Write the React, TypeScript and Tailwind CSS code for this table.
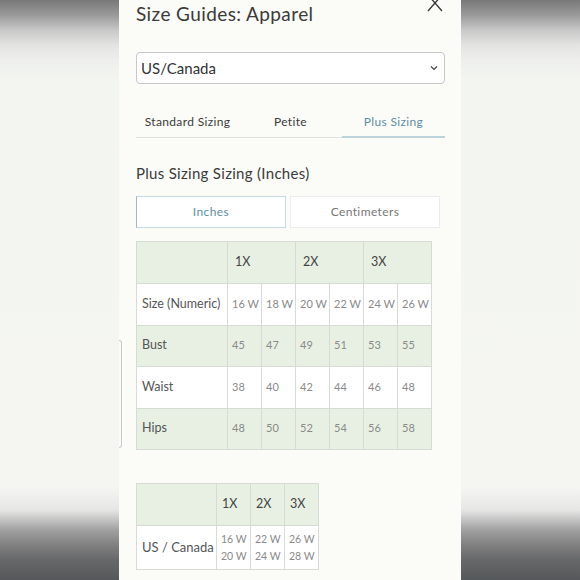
import React, { useState } from 'react';

const font = { fontFamily: 'Lato, "Open Sans", sans-serif' };

const sizeRows = [
  { label: 'Size (Numeric)', values: ['16 W', '18 W', '20 W', '22 W', '24 W', '26 W'], green: false },
  { label: 'Bust', values: ['45', '47', '49', '51', '53', '55'], green: true },
  { label: 'Waist', values: ['38', '40', '42', '44', '46', '48'], green: false },
  { label: 'Hips', values: ['48', '50', '52', '54', '56', '58'], green: true },
];

const tabs = ['Standard Sizing', 'Petite', 'Plus Sizing'];

const App: React.FC = () => {
  const [activeTab, setActiveTab] = useState('Plus Sizing');
  const [unit, setUnit] = useState('in');

  return (
    <div
      className="w-[580px] h-[580px] overflow-hidden flex justify-center bg-[linear-gradient(to_bottom,#787878_0%,#9a9a9a_2.6%,#c8c8c8_5.2%,#e3e3e2_7.8%,#eeefec_10.3%,#f3f5f0_13.8%,#f5f6f2_84%,#e6e6e5_87.9%,#c2c2c2_89.7%,#a0a0a0_91.4%,#808081_94%,#666768_96.6%,#55585a_100%)]"
      style={font}
    >
      {/* Panel */}
      <div className="relative w-[342px] h-full bg-[#fbfbf8] pl-[17px] pr-[16px]">
        {/* close */}
        <svg className="absolute left-[307px] top-[-6px]" width="18" height="19" viewBox="0 0 18 19">
          <path d="M2 1 L16 17 M16 1 L2 17" stroke="#333" strokeWidth="1.3" fill="none" />
        </svg>

        {/* edge of something underneath */}
        <div className="absolute left-0 top-[340px] w-[3px] h-[108px] border border-l-0 border-[#c9c9c9] rounded-r-[3px]" />

        <h1 className="pt-[2px] text-[19px] leading-6 text-[#3a3a3a] tracking-[0.4px]">Size Guides: Apparel</h1>

        {/* Region select */}
        <div className="mt-[26px] h-8 bg-white border border-[#c8c8c8] rounded-[4px] flex items-center justify-between pl-[4px] pr-[6px]">
          <span className="text-[15px] text-[#333]">US/Canada</span>
          <svg width="8" height="6" viewBox="0 0 8 6">
            <path d="M1 1.5 L4 4.5 L7 1.5" stroke="#444" strokeWidth="1.2" fill="none" />
          </svg>
        </div>

        {/* Tabs */}
        <div className="mt-[19px] flex border-b border-[#dfe3e0]">
          {tabs.map((t) => (
            <button
              key={t}
              onClick={() => setActiveTab(t)}
              className={`flex-1 h-[35px] pt-[4px] text-[12px] tracking-[0.35px] -mb-px border-b-2 ${
                activeTab === t ? 'text-[#5d8fa2] border-[#bcd3dc]' : 'text-[#3a3a3a] border-transparent'
              }`}
            >
              {t}
            </button>
          ))}
        </div>

        <h2 className="mt-[25px] text-[15px] leading-5 text-[#3a3a3a] tracking-[0.3px]">Plus Sizing Sizing (Inches)</h2>

        {/* Unit toggle */}
        <div className="mt-[13px] flex gap-[4px] w-[304px]">
          <button
            onClick={() => setUnit('in')}
            className={`flex-1 h-[32px] text-[12px] tracking-[0.4px] bg-white border ${
              unit === 'in' ? 'border-[#c5dbe3] border-l-[#9fb8c2] text-[#5d8fa2]' : 'border-[#ececec] text-[#777]'
            }`}
          >
            Inches
          </button>
          <button
            onClick={() => setUnit('cm')}
            className={`flex-1 h-[32px] text-[12px] tracking-[0.4px] bg-white border ${
              unit === 'cm' ? 'border-[#c5dbe3] text-[#5d8fa2]' : 'border-[#ececec] text-[#777]'
            }`}
          >
            Centimeters
          </button>
        </div>

        {/* Main size table */}
        <table className="mt-[13px] w-[296px] table-fixed border-collapse">
          <colgroup>
            <col className="w-[91px]" />
            {[0, 1, 2, 3, 4, 5].map((i) => (
              <col key={i} className="w-[34px]" />
            ))}
          </colgroup>
          <tbody>
            <tr className="h-[42px] bg-[#e8f0e3]">
              <td className="border border-[#d6dbd4]" />
              {['1X', '2X', '3X'].map((h) => (
                <td key={h} colSpan={2} className="border border-[#d6dbd4] pl-[7px] text-[12.5px] text-[#444]">
                  {h}
                </td>
              ))}
            </tr>
            {sizeRows.map((r) => (
              <tr key={r.label} className={`h-[41.5px] ${r.green ? 'bg-[#e8f0e3]' : 'bg-white'}`}>
                <td className="border border-[#d6dbd4] pl-[5px] text-[12.5px] text-[#555] whitespace-nowrap">{r.label}</td>
                {r.values.map((v, i) => (
                  <td key={i} className="border border-[#d6dbd4] pl-[4px] pb-[1px] text-[11px] text-[#8a8a8a] whitespace-nowrap">
                    {v}
                  </td>
                ))}
              </tr>
            ))}
          </tbody>
        </table>

        {/* Conversion table */}
        <table className="mt-[33px] w-[182px] table-fixed border-collapse">
          <colgroup>
            <col className="w-[80px]" />
            <col className="w-[34px]" />
            <col className="w-[34px]" />
            <col className="w-[34px]" />
          </colgroup>
          <tbody>
            <tr className="h-[42px] bg-[#e8f0e3]">
              <td className="border border-[#d6dbd4]" />
              {['1X', '2X', '3X'].map((h) => (
                <td key={h} className="border border-[#d6dbd4] pl-[5px] text-[12.5px] text-[#444]">
                  {h}
                </td>
              ))}
            </tr>
            <tr className="h-[44px] bg-white">
              <td className="border border-[#d6dbd4] pl-[5px] text-[13px] text-[#555] whitespace-nowrap">US / Canada</td>
              {[
                ['16 W', '20 W'],
                ['22 W', '24 W'],
                ['26 W', '28 W'],
              ].map((pair, i) => (
                <td key={i} className="border border-[#d6dbd4] pl-[4px] text-[10.5px] leading-[17px] text-[#8a8a8a] whitespace-nowrap">
                  {pair[0]}
                  <br />
                  {pair[1]}
                </td>
              ))}
            </tr>
          </tbody>
        </table>
      </div>
    </div>
  );
};

export default App;
